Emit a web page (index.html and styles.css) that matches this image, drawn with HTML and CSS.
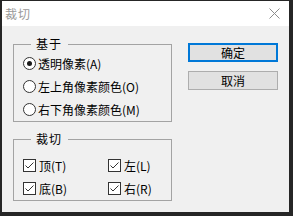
FILE: index.html
```html
<!DOCTYPE html>
<html lang="zh">

<head>
    <meta charset="UTF-8">
    <meta name="viewport" content="width=device-width, initial-scale=1.0">
    <title>裁切</title>
    <link rel="stylesheet" href="styles.css">
</head>

<body>
    <section class="dialog">
        <div class="titlebar">
            <span class="title">裁切</span>
            <svg class="close" width="11" height="11" viewBox="0 0 11 11">
                <path d="M0.5 0.5 L10.5 10.5 M10.5 0.5 L0.5 10.5" stroke="#8c8c8c" stroke-width="1" fill="none" />
            </svg>
        </div>

        <div class="content">
            <div class="groups">
                <div class="group group-base">
                    <span class="legend">基于</span>
                    <label class="option"><span class="radio checked"></span>透明像素(A)</label>
                    <label class="option"><span class="radio"></span>左上角像素颜色(O)</label>
                    <label class="option"><span class="radio"></span>右下角像素颜色(M)</label>
                </div>

                <div class="group group-crop">
                    <span class="legend">裁切</span>
                    <div class="checks">
                        <label class="option"><span class="check"><svg width="11" height="11" viewBox="0 0 11 11"><path d="M1.5 5.5 L4 8 L9.5 2.5" stroke="#333" stroke-width="1" fill="none" /></svg></span>顶(T)</label>
                        <label class="option"><span class="check"><svg width="11" height="11" viewBox="0 0 11 11"><path d="M1.5 5.5 L4 8 L9.5 2.5" stroke="#333" stroke-width="1" fill="none" /></svg></span>左(L)</label>
                        <label class="option"><span class="check"><svg width="11" height="11" viewBox="0 0 11 11"><path d="M1.5 5.5 L4 8 L9.5 2.5" stroke="#333" stroke-width="1" fill="none" /></svg></span>底(B)</label>
                        <label class="option"><span class="check"><svg width="11" height="11" viewBox="0 0 11 11"><path d="M1.5 5.5 L4 8 L9.5 2.5" stroke="#333" stroke-width="1" fill="none" /></svg></span>右(R)</label>
                    </div>
                </div>
            </div>

            <div class="buttons">
                <div class="btn btn-default">确定</div>
                <div class="btn">取消</div>
            </div>
        </div>
    </section>
</body>

</html>
```

FILE: styles.css
```css
body {
    margin: 0;
    background-color: #262626;
    font-family: "Noto Sans CJK SC", "Microsoft YaHei", sans-serif;
    font-size: 12px;
    color: #000;
}

.dialog {
    margin: 1px 4px 0 2px;
    width: 287px;
    height: 211px;
    background-color: #f0f0f0;
}

.titlebar {
    height: 25px;
    box-sizing: border-box;
    padding: 0 9px 0 3px;
    background-color: #fff;
    display: flex;
    align-items: center;
    justify-content: space-between;
}

.title {
    color: #999;
    line-height: 14px;
    letter-spacing: 1px;
}

.content {
    display: flex;
    padding: 17px 0 0 11px;
}

.group {
    position: relative;
    width: 159px;
    box-sizing: border-box;
    border: 1px solid #a3a3a3;
}

.group-base {
    height: 78px;
    margin-top: 1px;
    padding: 7px 0 0 9px;
}

.group-crop {
    height: 62px;
    margin-top: 17px;
    padding: 14px 0 0 9px;
}

.legend {
    position: absolute;
    top: -8px;
    left: 17px;
    padding: 0 6px 0 5px;
    background-color: #f0f0f0;
    line-height: 14px;
    letter-spacing: 1px;
}

.option {
    display: flex;
    align-items: center;
    height: 23px;
    line-height: 14px;
    white-space: nowrap;
}

.checks {
    display: grid;
    grid-template-columns: 85px 1fr;
}

.radio {
    width: 13px;
    height: 13px;
    box-sizing: border-box;
    border: 1px solid #333;
    border-radius: 50%;
    background-color: #fff;
    margin-right: 2px;
    display: flex;
    align-items: center;
    justify-content: center;
}

.radio.checked::after {
    content: "";
    width: 5px;
    height: 5px;
    border-radius: 50%;
    background-color: #1a1a1a;
}

.check {
    width: 13px;
    height: 13px;
    box-sizing: border-box;
    border: 1px solid #333;
    background-color: #fff;
    margin-right: 3px;
    display: flex;
}

.buttons {
    margin-left: 16px;
    display: flex;
    flex-direction: column;
    gap: 9px;
}

.btn {
    width: 90px;
    height: 19px;
    box-sizing: border-box;
    border: 1px solid #adadad;
    background-color: #e1e1e1;
    display: flex;
    align-items: center;
    justify-content: center;
    line-height: 14px;
}

.btn-default {
    border: 2px solid #0078d7;
}
```
